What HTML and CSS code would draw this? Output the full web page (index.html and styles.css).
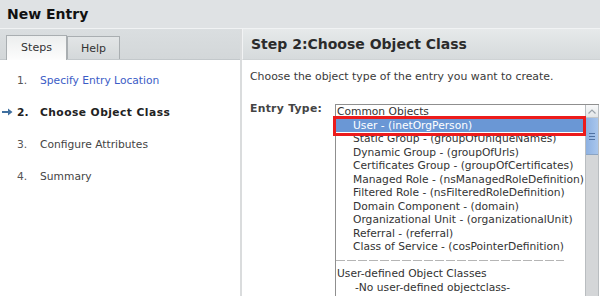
FILE: index.html
```html
<!DOCTYPE html>
<html lang="en">
<head>
  <meta charset="UTF-8" />
  <title>New Entry</title>
  <link rel="stylesheet" href="styles.css">
</head>
<body>

  <div class="pencere">
    <div class="baslik">New Entry</div>

    <div class="govde">
      <div class="yan">
        <div class="sekmeler">
          <div class="sekme aktif">Steps</div>
          <div class="sekme">Help</div>
        </div>
        <ol class="adimlar">
          <li class="adim"><span class="ok"></span><span class="no">1.</span><span class="link">Specify Entry Location</span></li>
          <li class="adim simdiki">
            <span class="ok">
              <svg width="11" height="8" viewBox="0 0 11 8"><path d="M0 3h6V0.5L10.5 4 6 7.5V5H0z" fill="#3f6f9f"/></svg>
            </span>
            <span class="no">2.</span><span>Choose Object Class</span>
          </li>
          <li class="adim"><span class="ok"></span><span class="no">3.</span><span>Configure Attributes</span></li>
          <li class="adim"><span class="ok"></span><span class="no">4.</span><span>Summary</span></li>
        </ol>
      </div>

      <div class="ana">
        <div class="ana-baslik">Step 2:Choose Object Class</div>
        <div class="ana-icerik">
          <p class="aciklama">Choose the object type of the entry you want to create.</p>
          <div class="alan">
            <div class="etiket">Entry Type:</div>
            <div class="liste">
              <div class="satirlar">
                <div class="grup">Common Objects</div>
                <div class="oge secili">User - (inetOrgPerson)<span class="kirmizi"></span></div>
                <div class="oge">Static Group - (groupOfUniqueNames)</div>
                <div class="oge">Dynamic Group - (groupOfUrls)</div>
                <div class="oge">Certificates Group - (groupOfCertificates)</div>
                <div class="oge">Managed Role - (nsManagedRoleDefinition)</div>
                <div class="oge">Filtered Role - (nsFilteredRoleDefinition)</div>
                <div class="oge">Domain Component - (domain)</div>
                <div class="oge">Organizational Unit - (organizationalUnit)</div>
                <div class="oge">Referral - (referral)</div>
                <div class="oge">Class of Service - (cosPointerDefinition)</div>
                <div class="ayrac"><span></span></div>
                <div class="grup">User-defined Object Classes</div>
                <div class="oge bos">-No user-defined objectclass-</div>
              </div>
              <div class="kaydirma">
                <div class="yukari">
                  <svg width="8" height="5" viewBox="0 0 8 5"><path d="M0.5 4.5L4 1l3.5 3.5" fill="none" stroke="#9aa3ab" stroke-width="1.2"/></svg>
                </div>
                <div class="tutamac"><i></i><i></i><i></i></div>
              </div>
            </div>
          </div>
        </div>
      </div>
    </div>
  </div>

</body>
</html>
```

FILE: styles.css
```css
/* Genel */
body {
  margin: 0;
  font-family: "DejaVu Sans", sans-serif;
  color: #3a3a3a;
  background: #fff;
}

.pencere {
  width: 600px;
  height: 296px;
  overflow: hidden;
  display: flex;
  flex-direction: column;
}

.baslik {
  height: 28px;
  line-height: 28px;
  padding-left: 7px;
  font-size: 14px;
  font-weight: bold;
  color: #111;
  background: #dfe2e4;
  border-bottom: 1px solid #f1f3f4;
}

.govde {
  flex: 1;
  display: flex;
}

/* Sol taraf: sekmeler ve adımlar */
.yan {
  width: 240px;
  border-right: 2px solid #dadcdd;
}

.sekmeler {
  height: 31px;
  box-sizing: border-box;
  padding: 7px 0 0 6px;
  display: flex;
  align-items: flex-end;
  background: linear-gradient(#dadee0, #d3d7d9);
  border-bottom: 1px solid #c3c8cb;
}

.sekme {
  height: 23px;
  line-height: 23px;
  box-sizing: border-box;
  font-size: 11px;
  color: #333;
  text-align: center;
  border: 1px solid #a9aeb1;
  border-bottom: none;
  background: linear-gradient(#e2e5e6, #d4d8da);
  width: 53px;
}

.sekme.aktif {
  width: 61px;
  height: 25px;
  line-height: 24px;
  margin-bottom: -1px;
  background: linear-gradient(#eceeee, #fdfdfd);
}

.adimlar {
  list-style: none;
  margin: 0;
  padding: 4px 0 0 2px;
}

.adim {
  display: flex;
  align-items: center;
  height: 32px;
  font-size: 10.7px;
  color: #444;
}

.ok {
  width: 15px;
  display: flex;
  align-items: center;
}

.no {
  width: 23px;
  color: #555;
}

.link {
  color: #3b5cc6;
}

.simdiki {
  font-weight: bold;
  color: #222;
  letter-spacing: 0.45px;
}

.simdiki .no {
  color: #222;
  letter-spacing: 0;
}

/* Sağ taraf */
.ana {
  flex: 1;
  display: flex;
  flex-direction: column;
}

.ana-baslik {
  height: 31px;
  line-height: 31px;
  padding-left: 8px;
  font-size: 14px;
  font-weight: bold;
  color: #2b2b2b;
  background: linear-gradient(#e6e9ea, #d6dadc);
  border-left: 1px solid #f2f3f4;
  border-bottom: 1px solid #cfd3d5;
  box-sizing: border-box;
}

.ana-icerik {
  flex: 1;
  padding: 9px 1px 0 8px;
}

.aciklama {
  margin: 0 0 16px;
  line-height: 16px;
  font-size: 10.9px;
  color: #3a3a3a;
}

.alan {
  display: flex;
  align-items: flex-start;
}

.etiket {
  width: 85px;
  line-height: 16px;
  font-size: 10.8px;
  font-weight: bold;
  letter-spacing: 0.3px;
  color: #444;
}

.liste {
  flex: 1;
  display: flex;
  margin-top: 3px;
  height: 200px;
  border: 1px solid #8f8f8f;
  border-right: none;
  background: #fff;
}

.satirlar {
  flex: 1;
  font-size: 10.7px;
  line-height: 13.5px;
  color: #333;
}

.grup {
  padding-left: 1px;
}

.oge {
  padding-left: 17px;
  white-space: nowrap;
}

.oge.bos {
  padding-left: 19px;
}

.oge.secili {
  position: relative;
  background: #6a97d5;
  color: #fff;
}

/* Üstteki kırmızı işaret kutusu */
.kirmizi {
  position: absolute;
  top: -3px;
  bottom: -4px;
  left: -3px;
  right: -1px;
  border: 3px solid #ec1b1b;
}

.ayrac {
  height: 13.5px;
  display: flex;
  align-items: center;
}

.ayrac span {
  width: 228px;
  height: 1px;
  background: repeating-linear-gradient(90deg, #b5b5b5 0 9px, transparent 9px 11px);
}

.kaydirma {
  width: 14px;
  box-sizing: border-box;
  border-left: 1px solid #b9bdc0;
  border-right: 1px solid #b9bdc0;
  background: #d4d6d8;
  display: flex;
  flex-direction: column;
}

.yukari {
  height: 12px;
  display: flex;
  align-items: center;
  justify-content: center;
  background: linear-gradient(#f8f9fa, #e3e6e8);
  border-bottom: 1px solid #c3c7ca;
}

.tutamac {
  height: 36px;
  background: linear-gradient(90deg, #8db1e2, #a9c6ec);
  border-bottom: 1px solid #8aa4c4;
  display: flex;
  flex-direction: column;
  align-items: center;
  justify-content: center;
  gap: 2px;
}

.tutamac i {
  width: 6px;
  height: 1px;
  background: #4f72a3;
}
```
